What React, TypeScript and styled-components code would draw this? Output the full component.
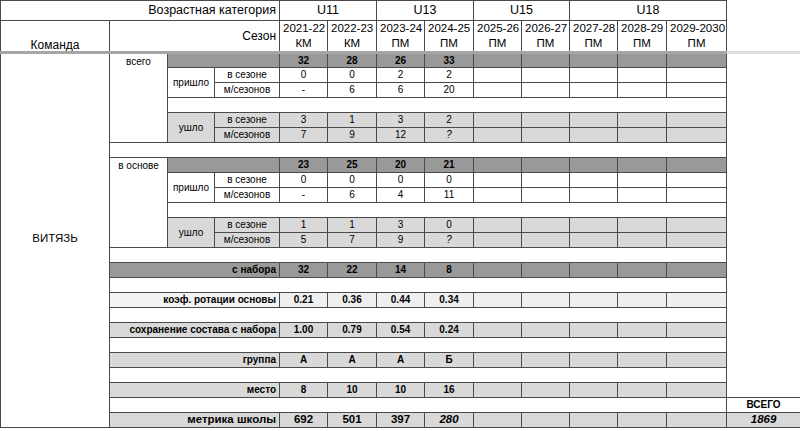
import React from 'react'
import styled, { createGlobalStyle } from 'styled-components'

const LINE = '#4a4a4a'
const DARK = '#999999'
const GREY = '#d9d9d9'
const PALE = '#efefef'
const PALER = '#f3f3f3'

type Value = string | { v: string; italic?: boolean }

type CellProps = {
	$bg?: string
	$bold?: boolean
	$italic?: boolean
	$align?: 'left' | 'center' | 'right'
	$valign?: 'top' | 'middle' | 'bottom'
	$size?: number
	$bare?: boolean
}

let GlobalStyle = createGlobalStyle`
	html, body {
		margin: 0;
		padding: 0;
		background: #fff;
	}
	body {
		font-family: "Liberation Sans", Arial, sans-serif;
		color: #000;
	}
`

let Sheet = styled.table`
	width: 800px;
	table-layout: fixed;
	border-collapse: collapse;
	font-size: 10px;
`

let Row = styled.tr<{ $h?: number }>`
	height: ${p => p.$h ?? 15}px;
`

let Cell = styled.td<CellProps>`
	padding: 0 3px;
	line-height: 1;
	white-space: nowrap;
	overflow: hidden;
	background: ${p => p.$bg ?? '#fff'};
	font-weight: ${p => (p.$bold ? 700 : 400)};
	font-style: ${p => (p.$italic ? 'italic' : 'normal')};
	font-size: ${p => p.$size ?? 10}px;
	text-align: ${p => p.$align ?? 'center'};
	vertical-align: ${p => p.$valign ?? 'middle'};
	border: ${p => (p.$bare ? 'none' : `1px solid ${LINE}`)};
`

let HeadCell = styled(Cell)`
	border-top: ${p => (p.$bare ? 'none' : `1px solid ${LINE}`)};
`

let SeasonCell = styled(Cell)`
	line-height: 15px;
	font-size: 11.5px;
	border-bottom: 3px solid #a6a6a6;
`

let FreezeCell = styled(Cell)`
	border-bottom: 3px solid ${p => (p.$bare ? '#dcdcdc' : '#a6a6a6')};
`

let TeamCell = styled(Cell)`
	padding-bottom: 3px;
`

let GroupLabel = styled(Cell)`
	padding-top: 3px;
`

let seasons = [
	['2021-22', 'КМ'],
	['2022-23', 'КМ'],
	['2023-24', 'ПМ'],
	['2024-25', 'ПМ'],
	['2025-26', 'ПМ'],
	['2026-27', 'ПМ'],
	['2027-28', 'ПМ'],
	['2028-29', 'ПМ'],
	['2029-2030', 'ПМ'],
]

let widths = [109, 58, 47, 65, 48, 49, 48, 49, 48, 48, 48, 49, 60, 74]

let ask: Value = { v: '?', italic: true }

type DataProps = {
	values: Value[]
	bg?: string
	bold?: boolean
	size?: number
}

let DataCells = ({ values, bg, bold, size }: DataProps) => (
	<>
		{seasons.map((_, i) => {
			let raw = values[i]
			let v = typeof raw === 'string' ? raw : raw?.v ?? ''
			let italic = typeof raw === 'object' && raw.italic
			return (
				<Cell key={i} $bg={bg} $bold={bold} $size={size} $italic={italic}>
					{v}
				</Cell>
			)
		})}
	</>
)

let Blank = ({ span }: { span: number }) => <Cell colSpan={span} />

type BlockProps = {
	title: string
	totals: string[]
	inSeason: Value[]
	multi: Value[]
	outSeason: Value[]
	outMulti: Value[]
	first?: boolean
}

let Block = ({ title, totals, inSeason, multi, outSeason, outMulti, first }: BlockProps) => (
	<>
		<Row>
			{first && (
				<TeamCell rowSpan={25} $size={11.5}>
					ВИТЯЗЬ
				</TeamCell>
			)}
			<GroupLabel rowSpan={6} $valign='top'>{title}</GroupLabel>
			<Cell colSpan={2} $bg={DARK} />
			<DataCells values={totals} bg={DARK} bold />
			{first && <Cell rowSpan={23} $bare />}
		</Row>
		<Row>
			<Cell rowSpan={2}>пришло</Cell>
			<Cell>в сезоне</Cell>
			<DataCells values={inSeason} />
		</Row>
		<Row>
			<Cell>м/сезонов</Cell>
			<DataCells values={multi} />
		</Row>
		<Row>
			<Blank span={11} />
		</Row>
		<Row>
			<Cell rowSpan={2} $bg={GREY}>ушло</Cell>
			<Cell $bg={GREY}>в сезоне</Cell>
			<DataCells values={outSeason} bg={GREY} />
		</Row>
		<Row>
			<Cell $bg={GREY}>м/сезонов</Cell>
			<DataCells values={outMulti} bg={GREY} />
		</Row>
		<Row>
			<Blank span={12} />
		</Row>
	</>
)

type StatProps = {
	label: string
	values: Value[]
	labelBg: string
	bg: string
	labelSize?: number
	size?: number
	total?: React.ReactNode
}

let StatRow = ({ label, values, labelBg, bg, labelSize, size, total }: StatProps) => (
	<Row>
		<Cell colSpan={3} $align='right' $bold $bg={labelBg} $size={labelSize}>
			{label}
		</Cell>
		<DataCells values={values} bg={bg} bold size={size} />
		{total}
	</Row>
)

let BlankRow = ({ total }: { total?: React.ReactNode }) => (
	<Row>
		<Blank span={12} />
		{total}
	</Row>
)

export default function App() {
	return (
		<>
			<GlobalStyle />
			<Sheet>
				<colgroup>
					{widths.map((w, i) => (
						<col key={i} style={{ width: w }} />
					))}
				</colgroup>
				<thead>
					<Row $h={20}>
						<HeadCell colSpan={4} $align='right' $size={12.5}>
							Возрастная категория
						</HeadCell>
						<HeadCell colSpan={2} $size={12.5}>U11</HeadCell>
						<HeadCell colSpan={2} $size={12.5}>U13</HeadCell>
						<HeadCell colSpan={2} $size={12.5}>U15</HeadCell>
						<HeadCell colSpan={3} $size={12.5}>U18</HeadCell>
						<HeadCell $bare />
					</Row>
					<Row $h={30}>
						<FreezeCell $size={12} $valign='bottom'>Команда</FreezeCell>
						<FreezeCell colSpan={3} $size={12} $align='right'>Сезон</FreezeCell>
						{seasons.map(([y, t]) => (
							<SeasonCell key={y}>
								{y}
								<br />
								{t}
							</SeasonCell>
						))}
						<FreezeCell $bare />
					</Row>
				</thead>
				<tbody>
					<Block
						first
						title='всего'
						totals={['32', '28', '26', '33']}
						inSeason={['0', '0', '2', '2']}
						multi={['-', '6', '6', '20']}
						outSeason={['3', '1', '3', '2']}
						outMulti={['7', '9', '12', ask]}
					/>
					<Block
						title='в основе'
						totals={['23', '25', '20', '21']}
						inSeason={['0', '0', '0', '0']}
						multi={['-', '6', '4', '11']}
						outSeason={['1', '1', '3', '0']}
						outMulti={['5', '7', '9', ask]}
					/>
					<StatRow label='с набора' values={['32', '22', '14', '8']} labelBg={DARK} bg={DARK} />
					<BlankRow />
					<StatRow
						label='коэф. ротации основы'
						values={['0.21', '0.36', '0.44', '0.34']}
						labelBg={PALER}
						bg={PALE}
					/>
					<BlankRow />
					<StatRow
						label='сохранение состава с набора'
						values={['1.00', '0.79', '0.54', '0.24']}
						labelBg={GREY}
						bg={GREY}
					/>
					<BlankRow />
					<StatRow label='группа' values={['А', 'А', 'А', 'Б']} labelBg={GREY} bg={GREY} />
					<BlankRow />
					<StatRow label='место' values={['8', '10', '10', '16']} labelBg={GREY} bg={GREY} />
					<BlankRow total={<Cell $bold>ВСЕГО</Cell>} />
					<StatRow
						label='метрика школы'
						values={['692', '501', '397', { v: '280', italic: true }]}
						labelBg={GREY}
						bg={GREY}
						labelSize={11.5}
						size={11.5}
						total={
							<Cell $bg={GREY} $bold $italic $size={11.5}>
								1869
							</Cell>
						}
					/>
				</tbody>
			</Sheet>
		</>
	)
}
